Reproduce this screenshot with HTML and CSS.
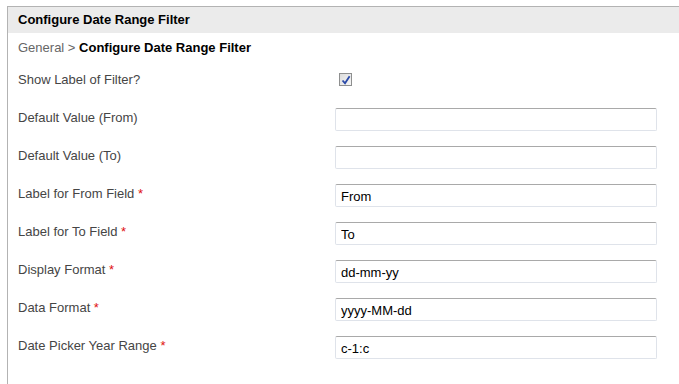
FILE: index.html
```html
<!DOCTYPE html>
<html lang="en">
<head>
  <meta charset="UTF-8" />
  <title>Configure Date Range Filter</title>
  <link rel="stylesheet" href="styles.css">
</head>
<body>
  <div class="panel">
    <div class="panel-head">Configure Date Range Filter</div>
    <div class="crumbs"><span class="crumb-parent">General &gt;</span> <b>Configure Date Range Filter</b></div>

    <form class="form">
      <label class="row-label check-label" for="show-label">Show Label of Filter?</label>
      <div class="field check-field">
        <span class="checkbox" id="show-label">
          <svg width="10" height="10" viewBox="0 0 10 10"><path d="M1.5 5.5 L4 8.2 L8.6 1.2" fill="none" stroke="#2b4aa8" stroke-width="1.8"/></svg>
        </span>
      </div>

      <label class="row-label" for="from-default">Default Value (From)</label>
      <div class="field"><input type="text" id="from-default" value=""></div>

      <label class="row-label" for="to-default">Default Value (To)</label>
      <div class="field"><input type="text" id="to-default" value=""></div>

      <label class="row-label" for="from-label">Label for From Field <span class="req">*</span></label>
      <div class="field"><input type="text" id="from-label" value="From"></div>

      <label class="row-label" for="to-label">Label for To Field <span class="req">*</span></label>
      <div class="field"><input type="text" id="to-label" value="To"></div>

      <label class="row-label" for="display-format">Display Format <span class="req">*</span></label>
      <div class="field"><input type="text" id="display-format" value="dd-mm-yy"></div>

      <label class="row-label" for="data-format">Data Format <span class="req">*</span></label>
      <div class="field"><input type="text" id="data-format" value="yyyy-MM-dd"></div>

      <label class="row-label" for="year-range">Date Picker Year Range <span class="req">*</span></label>
      <div class="field"><input type="text" id="year-range" value="c-1:c"></div>
    </form>
  </div>
</body>
</html>
```

FILE: styles.css
```css
html, body {
  height: 100%;
  overflow: hidden;
}
body {
  box-sizing: border-box;
  margin: 0;
  padding: 6px 0 0 7px;
  background: #fff;
  font-family: 'Liberation Sans', Arial, sans-serif;
  font-size: 13px;
  color: #444;
}
.panel {
  box-sizing: border-box;
  height: 100%;
  border-top: 1px solid #b3b3b3;
  border-left: 1px solid #b3b3b3;
}
.panel-head {
  background: #ebebeb;
  height: 26px;
  line-height: 26px;
  padding-left: 10px;
  font-weight: bold;
  color: #000;
}
.crumbs {
  padding: 7px 0 0 10px;
  line-height: 16px;
  color: #000;
}
.crumb-parent {
  color: #666;
}
.form {
  display: grid;
  grid-template-columns: 317px 322px;
  grid-auto-rows: 38px;
  margin: 14px 0 0 10px;
}
.row-label {
  padding-top: 2px;
  line-height: 16px;
  color: #454545;
}
.req {
  color: #e01010;
}
.field input {
  box-sizing: border-box;
  width: 322px;
  height: 23px;
  margin: 0;
  padding: 1px 5px 0;
  border: 1px solid #dfe3ea;
  border-top-color: #a9a9a9;
  border-radius: 2px;
  font-family: inherit;
  font-size: 13px;
  color: #000;
  outline: none;
}
.check-field {
  padding: 3px 0 0 4px;
}
.checkbox {
  display: flex;
  align-items: center;
  justify-content: center;
  box-sizing: border-box;
  width: 13px;
  height: 13px;
  border: 1px solid #8e8f8f;
  background: linear-gradient(135deg, #dcdcdc, #f6f6f6);
}
```
